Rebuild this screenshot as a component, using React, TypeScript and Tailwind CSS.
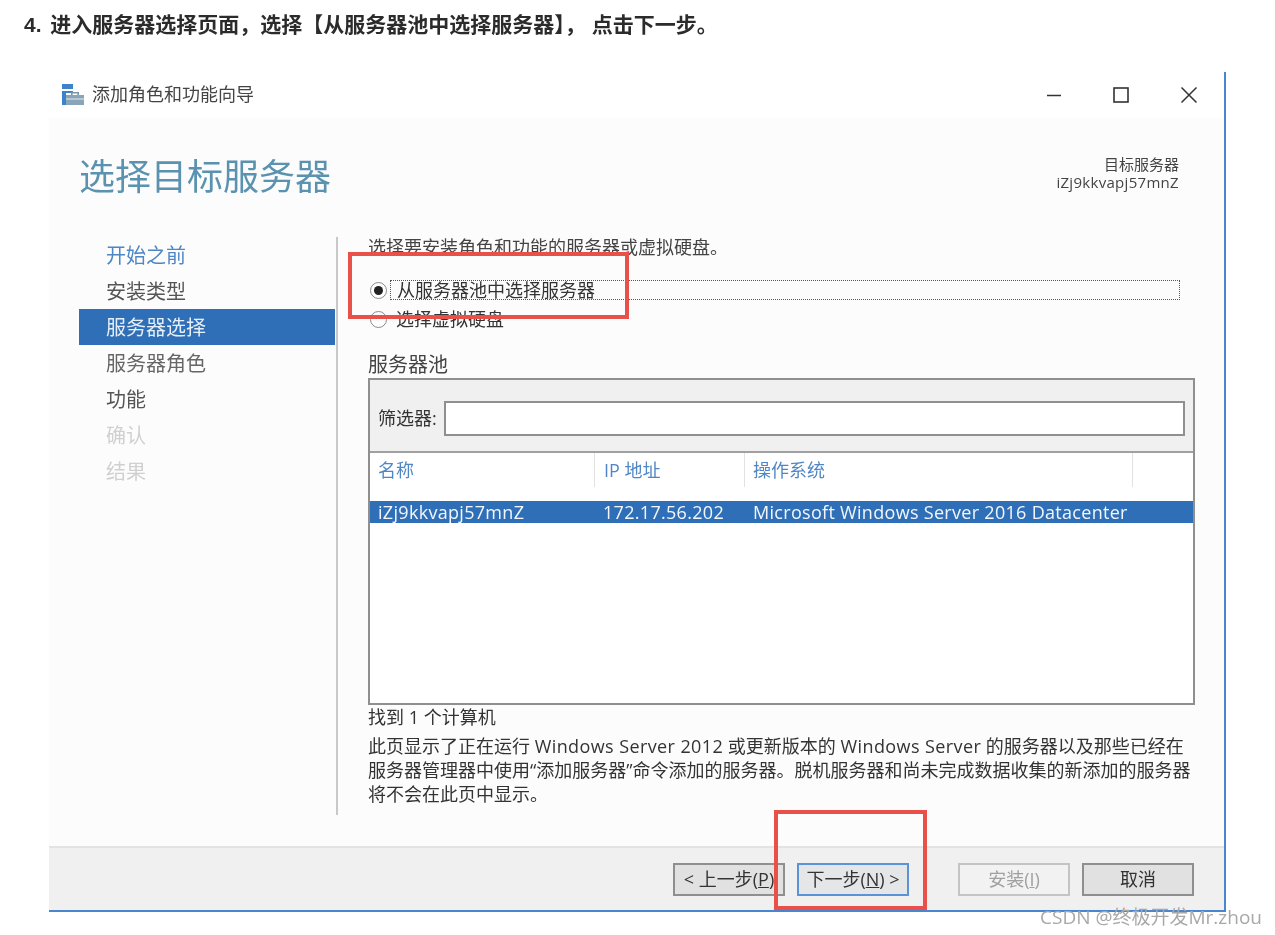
const cjk = { fontFamily: '"Open Sans", "Noto Sans CJK SC", sans-serif' };

function NavItem({ label, tone }: { label: string; tone: string }) {
  return <div className={`h-9 pl-[27px] pt-[2px] flex items-center text-[20px] ${tone}`}>{label}</div>;
}

function Radio({ checked }: { checked?: boolean }) {
  return (
    <span className="w-[17px] h-[17px] shrink-0 rounded-full border border-[#8a8a8a] bg-white flex items-center justify-center">
      {checked && <span className="w-[9px] h-[9px] rounded-full bg-[#222]" />}
    </span>
  );
}

function Btn({ children, cls }: { children: React.ReactNode; cls: string }) {
  return <div className={`h-[33px] w-[112px] border-2 flex items-center justify-center text-[18px] ${cls}`}>{children}</div>;
}

export default function App() {
  return (
    <div className="relative w-[1275px] h-[935px] bg-white overflow-hidden text-[#333] blur-[0.4px]" style={cjk}>
      <h1 className="pl-6 pt-[13px] h-[72px] text-[21px] leading-[24px] font-bold text-[#2b2b2b] whitespace-nowrap" style={{ fontFamily: '"Liberation Sans", "Noto Sans CJK SC", sans-serif' }}>
        4. <span className="ml-[3px]">进入服务器选择页面，选择【从服务器池中选择服务器】， 点击下一步。</span>
      </h1>

      <div className="ml-[49px] w-[1177px] h-[840px] flex flex-col border-r-2 border-b-2 border-[#4a86d0] bg-white">
        <div className="h-[46px] shrink-0 flex items-center pl-[13px] pr-[26px]">
          <svg width="22" height="22" viewBox="0 0 22 22" className="shrink-0">
            <rect x="0" y="0" width="11" height="5" fill="#3f82cc" />
            <rect x="0" y="7" width="11" height="2" fill="#3f82cc" />
            <rect x="0" y="7" width="4" height="14" fill="#3f82cc" />
            <path d="M4 11h18v10H4z" fill="#8aa4b8" />
            <path d="M9 11V8h8v3h-1.6V9.5H10.6V11z" fill="#7d96aa" />
            <rect x="4" y="14.5" width="18" height="1" fill="#e3ecf2" />
          </svg>
          <span className="ml-2 -mt-[2px] text-[18px] text-[#444]">添加角色和功能向导</span>
          <div className="ml-auto flex items-center">
            <svg width="16" height="16" viewBox="0 0 16 16"><path d="M1 8.5h14" stroke="#333" strokeWidth="1.5" /></svg>
            <svg width="16" height="16" viewBox="0 0 16 16" className="ml-[51px]"><rect x="1" y="1" width="14" height="14" fill="none" stroke="#333" strokeWidth="1.6" /></svg>
            <svg width="18" height="18" viewBox="0 0 18 18" className="ml-[51px]"><path d="M1.5 1.5l15 15M16.5 1.5l-15 15" stroke="#333" strokeWidth="1.5" /></svg>
          </div>
        </div>

        <div className="flex-1 min-h-0 flex flex-col bg-[#fcfcfc]">
          <div className="h-[119px] shrink-0 flex justify-between pl-[30px] pr-[45px]">
            <div className="pt-[32px] text-[36px] leading-[54px] text-[#5a92b0]">选择目标服务器</div>
            <div className="pt-[37px] text-right text-[15px] leading-[18px] text-[#444] tracking-[0.3px]">
              <div className="tracking-normal">目标服务器</div>
              <div>iZj9kkvapj57mnZ</div>
            </div>
          </div>

          <div className="flex-1 min-h-0 flex pl-[30px]">
            <div className="w-[259px] h-[578px] shrink-0 border-r-2 border-[#c8c8c8] pr-px">
              <NavItem label="开始之前" tone="text-[#4f86c6]" />
              <NavItem label="安装类型" tone="text-[#555]" />
              <NavItem label="服务器选择" tone="bg-[#2f6fb7] text-[#e6eef7]" />
              <NavItem label="服务器角色" tone="text-[#666]" />
              <NavItem label="功能" tone="text-[#555]" />
              <NavItem label="确认" tone="text-[#d0d0d0]" />
              <NavItem label="结果" tone="text-[#d0d0d0]" />
            </div>

            <div className="w-[827px] ml-[30px] text-[18px]">
              <div className="h-[20px] leading-[20px] text-[#444]">选择要安装角色和功能的服务器或虚拟硬盘。</div>
              <div className="mt-[23px] h-5 flex items-center pl-[2px]">
                <Radio checked />
                <div className="ml-[3px] w-[790px] h-5 flex items-center pl-[6px] border border-dotted border-[#555] text-[#333]">从服务器池中选择服务器</div>
              </div>
              <div className="mt-[9px] h-5 flex items-center pl-[2px]">
                <Radio />
                <span className="ml-[9px] text-[#333]">选择虚拟硬盘</span>
              </div>
              <div className="mt-[25px] h-[22px] leading-[22px] text-[20px] text-[#444]">服务器池</div>
              <div className="mt-[2px] h-[327px] border-2 border-[#8f8f8f] bg-white flex flex-col">
                <div className="h-[73px] shrink-0 bg-[#f0f0f0] border-b-2 border-[#a0a0a0] flex items-center pl-2 pr-2 pt-[6px]">
                  <span className="text-[#333] w-[60px] whitespace-nowrap">筛选器:</span>
                  <div className="ml-[6px] flex-1 h-[35px] bg-white border-2 border-[#8f8f8f]" />
                </div>
                <div className="h-[34px] shrink-0 flex text-[#4f86c6]">
                  <div className="w-[225px] pl-[8px] border-r border-[#e2e2e2] flex items-center">名称</div>
                  <div className="w-[150px] pl-[9px] border-r border-[#e2e2e2] flex items-center">IP 地址</div>
                  <div className="w-[388px] pl-[8px] border-r border-[#e2e2e2] flex items-center">操作系统</div>
                </div>
                <div className="mt-[14px] h-[22px] shrink-0 bg-[#2f6fb7] text-[#f2f6fb] flex items-center tracking-[0.3px]">
                  <div className="w-[225px] pl-[8px]">iZj9kkvapj57mnZ</div>
                  <div className="w-[150px] pl-[8px]">172.17.56.202</div>
                  <div className="pl-[8px] whitespace-nowrap">Microsoft Windows Server 2016 Datacenter</div>
                </div>
              </div>
              <div className="mt-[1px] h-[22px] leading-[22px] text-[#333]">找到 1 个计算机</div>
              <div className="mt-[6px] leading-[24px] text-[#333] whitespace-nowrap">
                <div>此页显示了正在运行 <span className="tracking-[0.4px]">Windows Server 2012</span> 或更新版本的 <span className="tracking-[0.4px]">Windows Server</span> 的服务器以及那些已经在</div>
                <div>服务器管理器中使用“添加服务器”命令添加的服务器。脱机服务器和尚未完成数据收集的新添加的服务器</div>
                <div>将不会在此页中显示。</div>
              </div>
            </div>
          </div>
        </div>

        <div className="h-[64px] shrink-0 bg-[#f0f0f0] border-t-2 border-[#e3e3e3] flex items-center justify-end pr-[30px]">
          <Btn cls="bg-[#e1e1e1] border-[#8f8f8f] text-[#333]">&lt;&nbsp;上一步(<u>P</u>)</Btn>
          <Btn cls="ml-3 bg-[#e4e6e8] border-[#5b93d8] text-[#333]">下一步(<u>N</u>)&nbsp;&gt;</Btn>
          <Btn cls="ml-[49px] bg-[#f2f2f2] border-[#c4c4c4] text-[#a0a0a0]">安装(<u>I</u>)</Btn>
          <Btn cls="ml-3 bg-[#e1e1e1] border-[#8f8f8f] text-[#333]">取消</Btn>
        </div>
      </div>

      <div className="absolute left-[348px] top-[252px] w-[281px] h-[67px] border-4 border-[#e9504a]" />
      <div className="absolute left-[774px] top-[810px] w-[153px] h-[100px] border-4 border-[#e9504a]" />
      <div className="absolute right-[13px] top-[906px] text-[19px] leading-[22px] text-[#a8a8a8] whitespace-nowrap">CSDN @终极开发Mr.zhou</div>
    </div>
  );
}
